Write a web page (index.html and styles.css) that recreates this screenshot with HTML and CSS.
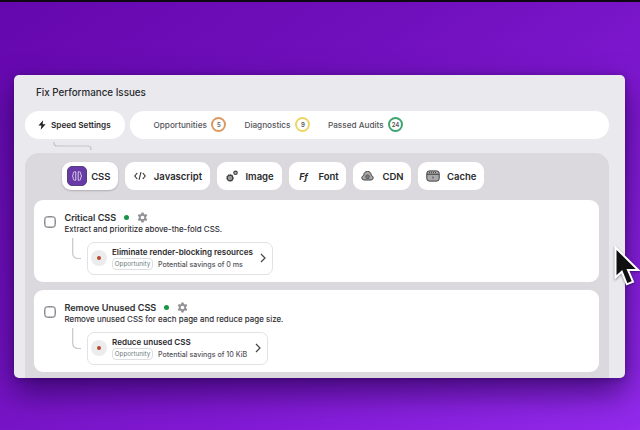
FILE: index.html
```html
<!DOCTYPE html>
<html lang="en">
<head>
<meta charset="utf-8">
<title>Fix Performance Issues</title>
<link rel="stylesheet" href="styles.css">
</head>
<body>
<svg class="defs" width="0" height="0" aria-hidden="true">
  <symbol id="gear" viewBox="0 0 24 24"><path fill-rule="evenodd" d="M9.500 1h5l.6 3.300 1.700 1 3.200-1.200 2.500 4.300-2.600 2.200v2.800l2.600 2.200-2.500 4.300-3.200-1.200-1.700 1-.6 3.300h-5l-.6-3.300-1.700-1L4 19.900l-2.500-4.300 2.600-2.200v-2.800L1.500 8.400 4 4.100l3.200 1.200 1.700-1zM12 8a4 4 0 1 0 0 8 4 4 0 0 0 0-8z"/></symbol>
  <symbol id="chevron" viewBox="0 0 6 10"><path d="M1 1l4 4-4 4" fill="none" stroke="#444" stroke-width="1.200"/></symbol>
  <symbol id="elbow" viewBox="0 0 10 22"><path d="M.7 0v15q0 5.500 5.500 5.500H9" fill="none" stroke="#c6c5ca" stroke-width="1.200"/></symbol>
</svg>
<main class="window">
  <h1>Fix Performance Issues</h1>
  <nav class="topbar">
    <div class="speed">
      <svg width="8" height="10" viewBox="0 0 8 10"><path d="M5.200.3L.4 5.600h3L2.700 9.700 7.600 4.200H4.600z" fill="#222"/></svg>
      <span>Speed Settings</span>
    </div>
    <div class="audits">
      <div class="audit a1"><span>Opportunities</span><b class="ring orange">5</b></div>
      <div class="audit a2"><span>Diagnostics</span><b class="ring yellow">9</b></div>
      <div class="audit a3"><span>Passed Audits</span><b class="ring green">24</b></div>
    </div>
  </nav>
  <div class="link"><svg width="40" height="10" viewBox="0 0 40 10"><path d="M1 0v1q0 3 3 3h31q3 0 3 3v1" fill="none" stroke="#c4c3c9" stroke-width="1.200"/></svg></div>
  <section class="panel">
    <div class="tabs">
      <div class="tab css active"><i class="tile"><svg width="12" height="12" viewBox="0 0 12 12" fill="none" stroke="#e4dcf0" stroke-width=".9"><path d="M4.800 1.800H3.600Q2.200 1.800 2.200 3.500V5L1.200 6l1 1v1.500q0 1.700 1.400 1.700h1.200zM7.200 1.800h1.200q1.400 0 1.400 1.700V5l1 1-1 1v1.500q0 1.700-1.400 1.700H7.200z"/></svg></i><span>CSS</span></div>
      <div class="tab js"><svg width="12" height="10" viewBox="0 0 12 10" fill="none" stroke="#333" stroke-width="1.100"><path d="M3.200 2L.8 5l2.400 3M8.800 2l2.400 3-2.400 3M7 1.200L5 8.800"/></svg><span>Javascript</span></div>
      <div class="tab image"><svg width="12" height="12" viewBox="0 0 12 12"><circle cx="4" cy="7.900" r="2.800" fill="#999" stroke="#3c3c3c" stroke-width="1.100"/><circle cx="4" cy="7.900" r="3.500" fill="none" stroke="#444" stroke-width=".7" stroke-dasharray="1.200 1.100"/><circle cx="9.500" cy="2.800" r="1.700" fill="#bbb" stroke="#3c3c3c" stroke-width="1.200"/></svg><span>Image</span></div>
      <div class="tab font"><em>Ff</em><span>Font</span></div>
      <div class="tab cdn"><svg width="13" height="12" viewBox="0 0 13 12"><path d="M3 10Q.8 9.800.8 7.800.8 6 2.700 5.600 2.900 1.500 6.500 1.500t3.800 4.100q1.900.4 1.900 2.200 0 2-2.200 2.200z" fill="#aaa" stroke="#444"/><circle cx="6.500" cy="6.800" r="2" fill="#777" stroke="#555" stroke-width=".7"/></svg><span>CDN</span></div>
      <div class="tab cache"><svg width="14" height="12" viewBox="0 0 14 12"><rect x=".8" y=".9" width="12.400" height="10.200" rx="2.500" fill="#aaa" stroke="#3c3c3c"/><path d="M1 4.300h12" stroke="#3c3c3c" stroke-width="1.100"/><path d="M3 2.600h8" stroke="#444" stroke-dasharray="1 1"/><path d="M7 6.500v2" stroke="#444"/></svg><span>Cache</span></div>
    </div>
    <article class="card">
      <i class="check"></i>
      <div class="body">
        <div class="heading"><h2>Critical CSS</h2><i class="dot"></i><svg class="gear" width="11" height="11"><use href="#gear"/></svg></div>
        <p>Extract and prioritize above-the-fold CSS.</p>
        <div class="detail">
          <svg class="elbow" width="10" height="22"><use href="#elbow"/></svg>
          <div class="box first"><i class="status"></i><div class="info"><strong>Eliminate render-blocking resources</strong><div class="meta"><span class="tag">Opportunity</span><span>Potential savings of 0 ms</span></div></div><svg class="chevron" width="6" height="10"><use href="#chevron"/></svg></div>
        </div>
      </div>
    </article>
    <article class="card">
      <i class="check"></i>
      <div class="body">
        <div class="heading"><h2>Remove Unused CSS</h2><i class="dot"></i><svg class="gear" width="11" height="11"><use href="#gear"/></svg></div>
        <p>Remove unused CSS for each page and reduce page size.</p>
        <div class="detail">
          <svg class="elbow" width="10" height="22"><use href="#elbow"/></svg>
          <div class="box second"><i class="status"></i><div class="info"><strong>Reduce unused CSS</strong><div class="meta"><span class="tag">Opportunity</span><span>Potential savings of 10 KiB</span></div></div><svg class="chevron" width="6" height="10"><use href="#chevron"/></svg></div>
        </div>
      </div>
    </article>
  </section>
</main>
<svg class="cursor" width="28" height="44" viewBox="0 0 28 44"><path d="M2.500 2.500V32.500l6.300-5.700 5 12.500 6.200-2.600-5-11.600h10.200z" fill="#111" stroke="#fff" stroke-width="2"/></svg>
</body>
</html>
```
FILE: styles.css
```css
* { box-sizing: border-box; }
body {
  margin: 0;
  width: 640px;
  height: 430px;
  overflow: hidden;
  border-top: 2px solid #0d0812;
  padding: 73px 0 0 13.6px;
  background: linear-gradient(145deg, #6507ae 0%, #7010bd 35%, #8119d3 65%, #932aec 100%);
  font-family: Inter, "Liberation Sans", sans-serif;
  color: #29292d;
}
.defs { position: absolute; }
h1, h2, p { margin: 0; }
i { display: block; }
svg { display: block; flex: none; }
span, strong, h1, h2, p { white-space: nowrap; }
.window {
  width: 611.8px;
  height: 303.4px;
  padding: 0 16.5px 0 11.4px;
  overflow: hidden;
  border-radius: 5px;
  background: #eae9ee;
  box-shadow: 0 14px 32px rgba(35, 0, 75, .7), 0 1px 6px rgba(35, 0, 75, .35);
}
h1 { height: 36px; padding-left: 11px; font-size: 9.8px; font-weight: 500; line-height: 35px; }
.topbar { display: flex; gap: 4.5px; height: 27.5px; }
.speed, .audits { display: flex; align-items: center; background: #fff; border-radius: 14px; }
.speed { width: 100.5px; padding-left: 13px; gap: 5px; font-size: 8.2px; font-weight: 600; }
.audits { flex: 1; padding-left: 23.5px; font-size: 8.2px; font-weight: 500; color: #55545a; }
.audit { display: flex; align-items: center; justify-content: space-between; }
.a1 { width: 73px; }
.a2 { width: 66px; margin-left: 18px; }
.a3 { width: 75px; margin-left: 17.5px; }
.ring { width: 15px; height: 15px; border: 2px solid; border-radius: 50%; font-size: 6px; font-weight: 600; line-height: 11px; text-align: center; -webkit-text-fill-color: #555; }
.orange { border-color: #dc9a62; }
.yellow { border-color: #ecd667; }
.green { border-color: #3fa46f; }
.link { height: 14.5px; padding: 3.5px 0 0 28px; }
.panel { height: 240px; padding: 9px 9.5px 0 9px; background: #dbd9dd; border-radius: 14px 14px 0 0; }
.tabs { display: flex; gap: 7px; height: 28px; padding-left: 28px; }
.tab { display: flex; align-items: center; height: 28px; justify-content: space-between; background: #fff; border-radius: 9px; font-size: 9.5px; font-weight: 600; }
.css { width: 56px; padding: 0 7.5px 0 5px; }
.js { width: 85px; padding: 0 8px 0 9px; }
.image { width: 65.2px; padding: 0 8.5px 0 9px; }
.font { width: 57px; padding: 0 7.5px 0 10px; }
.cdn { width: 58.3px; padding: 0 8px; }
.cache { width: 66px; padding: 0 8px; }
.active { box-shadow: 0 1px 2px rgba(0, 0, 0, .2); }
.tile { display: flex; align-items: center; justify-content: center; width: 20px; height: 20px; border-radius: 5px; background: #673aa7; border: 1px solid #56407c; }
.font em { font-size: 9px; font-weight: 700; letter-spacing: -.3px; }
.card { display: flex; height: 82.5px; margin-top: 9.7px; padding: 11px 0 0 10.5px; background: #fff; border-radius: 9px; }
.card + .card { margin-top: 7.7px; }
.check { flex: none; width: 12px; height: 12px; margin: 5px 8px 0 0; border: 1px solid #8c8b92; box-shadow: inset 0 0 0 .5px #8c8b92; border-radius: 3.5px; }
.heading { display: flex; align-items: center; height: 13px; }
h2 { font-size: 9.1px; font-weight: 500; -webkit-text-stroke: .15px; }
.dot { width: 5px; height: 5px; margin: 0 8px; border-radius: 50%; background: #199447; }
.gear { fill: #949399; }
p { height: 11px; font-size: 7.97px; line-height: 11px; -webkit-text-stroke: .1px; }
.detail { display: flex; padding: 2px 0 0 8px; }
.elbow { margin: 1px 4.5px 0 0; }
.box { display: flex; align-items: center; height: 33px; margin-top: 5px; padding: 0 6px 0 3.5px; border: 1px solid #e2e2e5; border-radius: 7px; }
.first { width: 186px; }
.second { width: 181px; }
.status { flex: none; width: 16px; height: 16px; margin-right: 4.5px; padding: 6px; border-radius: 50%; background: #ececef; }
.status::after { content: ""; display: block; width: 4px; height: 4px; border-radius: 50%; background: #b9482b; }
.info { flex: 1; }
strong { display: block; height: 12px; font-size: 8.05px; font-weight: 600; line-height: 12px; }
.meta { display: flex; align-items: center; gap: 5px; height: 13px; font-size: 7.1px; font-weight: 500; color: #55545b; }
.tag { width: 41px; height: 12px; border: 1px solid #dcdee1; border-radius: 4px; font-size: 6.3px; font-weight: 400; line-height: 10px; text-align: center; color: #6d7b7c; }
.cursor { position: absolute; left: 613px; top: 245px; filter: drop-shadow(0 1px 1px rgba(0, 0, 0, .4)); }
```
